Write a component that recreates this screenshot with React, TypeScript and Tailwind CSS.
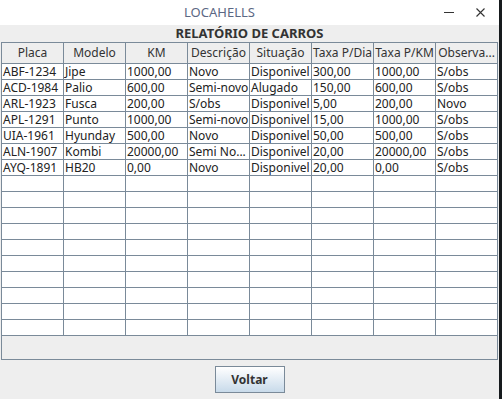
import React from 'react'

const COLUMNS = ['Placa', 'Modelo', 'KM', 'Descrição', 'Situação', 'Taxa P/Dia', 'Taxa P/KM', 'Observa...']

const ROWS: string[][] = [
  ['ABF-1234', 'Jipe', '1000,00', 'Novo', 'Disponivel', '300,00', '1000,00', 'S/obs'],
  ['ACD-1984', 'Palio', '600,00', 'Semi-novo', 'Alugado', '150,00', '600,00', 'S/obs'],
  ['ARL-1923', 'Fusca', '200,00', 'S/obs', 'Disponivel', '5,00', '200,00', 'Novo'],
  ['APL-1291', 'Punto', '1000,00', 'Semi-novo', 'Disponivel', '15,00', '1000,00', 'S/obs'],
  ['UIA-1961', 'Hyunday', '500,00', 'Novo', 'Disponivel', '50,00', '500,00', 'S/obs'],
  ['ALN-1907', 'Kombi', '20000,00', 'Semi No...', 'Disponivel', '20,00', '20000,00', 'S/obs'],
  ['AYQ-1891', 'HB20', '0,00', 'Novo', 'Disponivel', '20,00', '0,00', 'S/obs'],
]

const EMPTY_ROWS = 10

function Cell({ text, last }: { text: string; last: boolean }) {
  return (
    <div
      className={
        'h-[16px] border-b border-[#7a8a99] pl-[1px] text-[12px] leading-[15px] text-[#222] whitespace-nowrap overflow-hidden ' +
        (last ? 'w-[61px]' : 'w-[62px] border-r')
      }
    >
      {text}
    </div>
  )
}

export default function App() {
  const font = { fontFamily: '"Noto Sans", sans-serif' }
  const blanks = Array.from({ length: EMPTY_ROWS }, () => COLUMNS.map(() => ''))

  return (
    <div className="w-[502px] h-[399px] bg-[#161a1d] flex overflow-hidden" style={font}>
      <div className="w-[499px] h-[399px] bg-[#eeeeee] flex flex-col">
        {/* title bar */}
        <div className="h-[25px] bg-white flex items-center relative">
          <div className="flex-1 text-center pr-[60px] text-[13px] text-[#5b6884]">LOCAHELLS</div>
          <div className="absolute right-[14px] top-0 h-[25px] flex items-center gap-[22px]">
            <div className="w-[10px] h-[1px] bg-[#333]" />
            <svg width="9" height="9" viewBox="0 0 9 9">
              <path d="M0.5 0.5 L8.5 8.5 M8.5 0.5 L0.5 8.5" stroke="#333" strokeWidth="1.1" />
            </svg>
          </div>
        </div>

        {/* heading */}
        <div className="h-[17px] flex items-center justify-center text-[13px] font-bold text-[#333] leading-none">
          RELATÓRIO DE CARROS
        </div>

        {/* scroll pane */}
        <div className="ml-[1px] w-[497px] h-[318px] border border-[#7a8a99] flex flex-col">
          <div className="flex h-[21px] border-b border-[#7a8a99] bg-[#eeeeee]">
            {COLUMNS.map((c, i) => (
              <div
                key={c}
                className={
                  'h-[20px] flex items-center justify-center text-[12px] text-[#333] whitespace-nowrap overflow-hidden ' +
                  (i === COLUMNS.length - 1 ? 'w-[61px]' : 'w-[62px] border-r border-[#7a8a99]')
                }
              >
                {c}
              </div>
            ))}
          </div>
          <div className="bg-white">
            {[...ROWS, ...blanks].map((r, ri) => (
              <div key={ri} className="flex">
                {r.map((t, ci) => (
                  <Cell key={ci} text={t} last={ci === r.length - 1} />
                ))}
              </div>
            ))}
          </div>
        </div>

        {/* button */}
        <div className="flex justify-center pt-[6px]">
          <button className="w-[70px] h-[27px] border border-[#7a8a99] bg-gradient-to-b from-white to-[#c8daea] text-[12px] font-bold text-[#333]">
            Voltar
          </button>
        </div>
      </div>
    </div>
  )
}
